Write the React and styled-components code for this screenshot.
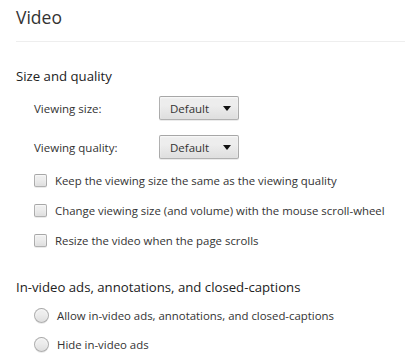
import React from "react"
import styled, { createGlobalStyle } from "styled-components"

const GlobalStyle = createGlobalStyle`
  body {
    margin: 0;
    background: #ffffff;
    font-family: "Open Sans", "Noto Sans", sans-serif;
    color: #303030;
  }
`

const Page = styled.div`
  width: 405px;
  height: 358px;
  overflow: hidden;
  background: #fff;
`

const Header = styled.header`
  height: 42px;
  margin-left: 16px;
  border-bottom: 1px solid #eeeeee;
  box-sizing: border-box;
`

const Title = styled.h1`
  margin: 0;
  padding-top: 4px;
  font-size: 17.5px;
  line-height: 26px;
  font-weight: 400;
  color: #333;
`

const Section = styled.section`
  padding-left: 16px;
  margin-top: ${p => p.$top}px;
`

const SectionTitle = styled.h3`
  margin: 0;
  font-size: 13.2px;
  line-height: 20px;
  font-weight: 400;
  color: #222;
`

const SelectRow = styled.div`
  display: flex;
  align-items: center;
  height: 24px;
  padding-left: 18px;
  margin-top: ${p => p.$top}px;
`

const Label = styled.span`
  width: 125px;
  font-size: 11.5px;
  color: #333;
`

const Select = styled.div`
  width: 80px;
  height: 24px;
  box-sizing: border-box;
  display: flex;
  align-items: center;
  justify-content: space-between;
  padding: 0 7px 0 10px;
  font-size: 11.5px;
  color: #333;
  border: 1px solid rgba(0, 0, 0, 0.25);
  border-radius: 2px;
  background-image: linear-gradient(#ededed, #ededed 38%, #dedede);
  box-shadow: 0 1px 0 rgba(0, 0, 0, 0.08), inset 0 1px 2px rgba(255, 255, 255, 0.75);
`

const Arrow = styled.span`
  width: 0;
  height: 0;
  border-left: 4.5px solid transparent;
  border-right: 4.5px solid transparent;
  border-top: 5px solid #111;
`

const OptionList = styled.div`
  margin-top: ${p => p.$top}px;
  padding-left: 18px;
`

const OptionRow = styled.label`
  display: flex;
  align-items: center;
  height: ${p => p.$h}px;
  font-size: 11.4px;
  color: #333;
`

const Box = styled.span`
  width: ${p => (p.$round ? 15 : 13)}px;
  height: ${p => (p.$round ? 15 : 13)}px;
  box-sizing: border-box;
  margin-right: 8px;
  flex: none;
  border: 1px solid rgba(0, 0, 0, 0.25);
  border-radius: ${p => (p.$round ? "50%" : "2px")};
  background-image: linear-gradient(#ededed, #ededed 38%, #dedede);
  box-shadow: 0 1px 0 rgba(0, 0, 0, 0.08), inset 0 1px 2px rgba(255, 255, 255, 0.75);
`

const checks = [
  "Keep the viewing size the same as the viewing quality",
  "Change viewing size (and volume) with the mouse scroll-wheel",
  "Resize the video when the page scrolls",
]

const radios = [
  "Allow in-video ads, annotations, and closed-captions",
  "Hide in-video ads",
]

const App = () => (
  <Page>
    <GlobalStyle />
    <Header>
      <Title>Video</Title>
    </Header>
    <Section $top={24}>
      <SectionTitle>Size and quality</SectionTitle>
      <SelectRow $top={10}>
        <Label>Viewing size:</Label>
        <Select>
          Default
          <Arrow />
        </Select>
      </SelectRow>
      <SelectRow $top={15}>
        <Label>Viewing quality:</Label>
        <Select>
          Default
          <Arrow />
        </Select>
      </SelectRow>
      <OptionList $top={6}>
        {checks.map(text => (
          <OptionRow key={text} $h={30}>
            <Box />
            {text}
          </OptionRow>
        ))}
      </OptionList>
    </Section>
    <Section $top={22}>
      <SectionTitle>In-video ads, annotations, and closed-captions</SectionTitle>
      <OptionList $top={4}>
        {radios.map(text => (
          <OptionRow key={text} $h={29}>
            <Box $round />
            {text}
          </OptionRow>
        ))}
      </OptionList>
    </Section>
  </Page>
)

export default App
